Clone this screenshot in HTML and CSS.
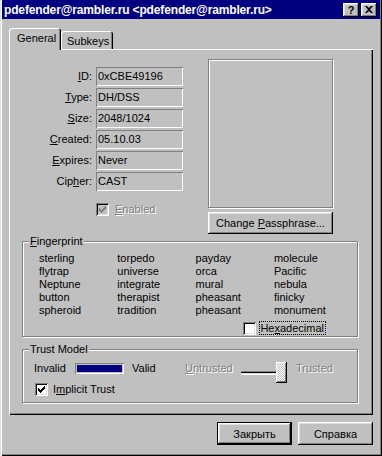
FILE: index.html
```html
<!DOCTYPE html>
<html lang="ru">
<head>
  <meta charset="UTF-8" />
  <title>Key Properties</title>
  <link rel="stylesheet" href="styles.css">
</head>
<body>

  <div class="window">
    <div class="titlebar">
      <span class="title">pdefender@rambler.ru &lt;pdefender@rambler.ru&gt;</span>
      <div class="caption-btns">
        <div class="cap-btn">?</div>
        <div class="cap-btn">
          <svg width="8" height="7" viewBox="0 0 8 7"><path d="M0 0h2l2 2 2-2h2L5 3.5 8 7H6L4 5 2 7H0l3-3.5z" fill="#000"/></svg>
        </div>
      </div>
    </div>

    <div class="tabs">
      <div class="tab active">General</div>
      <div class="tab">Subkeys</div>
    </div>

    <div class="page">
      <div class="top">
        <div class="props">
          <div class="grid">
            <span class="lbl"><u>I</u>D:</span><div class="field">0xCBE49196</div>
            <span class="lbl"><u>T</u>ype:</span><div class="field">DH/DSS</div>
            <span class="lbl"><u>S</u>ize:</span><div class="field">2048/1024</div>
            <span class="lbl"><u>C</u>reated:</span><div class="field">05.10.03</div>
            <span class="lbl"><u>E</u>xpires:</span><div class="field">Never</div>
            <span class="lbl">Cip<u>h</u>er:</span><div class="field">CAST</div>
          </div>
          <div class="check-row enabled-row">
            <span class="checkbox disabled">
              <svg width="13" height="13" viewBox="0 0 13 13"><path d="M9 3h1v1H9zM8 4h2v1H8zM3 5h1v1H3zM7 5h3v1H7zM3 6h2v1H3zM6 6h3v1H6zM3 7h5v1H3zM4 8h3v1H4zM5 9h1v1H5z" fill="#808080"/></svg>
            </span>
            <span class="dis"><u>E</u>nabled</span>
          </div>
        </div>
        <div class="photo-col">
          <div class="photo"></div>
          <div class="btn wide"><span>Change <u>P</u>assphrase...</span></div>
        </div>
      </div>

      <div class="group fingerprint">
        <div class="group-title"><u>F</u>ingerprint</div>
        <div class="words">
          <span>sterling</span><span>torpedo</span><span>payday</span><span>molecule</span>
          <span>flytrap</span><span>universe</span><span>orca</span><span>Pacific</span>
          <span>Neptune</span><span>integrate</span><span>mural</span><span>nebula</span>
          <span>button</span><span>therapist</span><span>pheasant</span><span>finicky</span>
          <span>spheroid</span><span>tradition</span><span>pheasant</span><span>monument</span>
        </div>
        <div class="check-row hex-row">
          <span class="checkbox"></span>
          <span class="focus">He<u>x</u>adecimal</span>
        </div>
      </div>

      <div class="group trust">
        <div class="group-title">Trust Model</div>
        <div class="trust-row">
          <span class="t-invalid">Invalid</span>
          <span class="validity"></span>
          <span class="t-valid">Valid</span>
          <span class="t-untrusted dis"><u>U</u>ntrusted</span>
          <div class="slider">
            <span class="track"></span>
            <span class="thumb"></span>
          </div>
          <span class="t-trusted dis">Trusted</span>
        </div>
        <div class="check-row implicit-row">
          <span class="checkbox">
            <svg width="13" height="13" viewBox="0 0 13 13"><path d="M9 3h1v1H9zM8 4h2v1H8zM3 5h1v1H3zM7 5h3v1H7zM3 6h2v1H3zM6 6h3v1H6zM3 7h5v1H3zM4 8h3v1H4zM5 9h1v1H5z" fill="#000"/></svg>
          </span>
          <span>I<u>m</u>plicit Trust</span>
        </div>
      </div>
    </div>

    <div class="footer">
      <div class="btn default">Закрыть</div>
      <div class="btn">Справка</div>
    </div>
  </div>

</body>
</html>
```

FILE: styles.css
```css
:root {
  --face: #c0c0c0;
  --shadow: #808080;
  --light: #dfdfdf;
  --navy: #000080;
}

* {
  margin: 0; padding: 0; box-sizing: border-box;
}

body {
  background-color: var(--face);
  font-family: "Liberation Sans", Arial, sans-serif;
  font-size: 11px;
  color: #000;
}

u { text-decoration: underline; text-underline-offset: 1px; }

.window {
  width: 382px;
  height: 456px;
  padding: 0 2px 2px 2px;
  background-color: var(--face);
  box-shadow: inset 1px 0 var(--light), inset 2px 0 #fff,
              inset -1px -1px #000, inset -2px -2px var(--shadow);
}

/* title bar */
.titlebar {
  height: 19px;
  background-color: var(--navy);
  color: #fff;
  display: flex;
  align-items: center;
  justify-content: space-between;
  padding: 0 3px 0 2px;
}

.title {
  font-weight: bold;
  font-size: 12px;
  letter-spacing: -0.15px;
}

.caption-btns {
  display: flex;
  gap: 2px;
}

.cap-btn {
  width: 16px;
  height: 14px;
  background-color: var(--face);
  color: #000;
  font-weight: bold;
  font-size: 11px;
  display: flex;
  align-items: center;
  justify-content: center;
  box-shadow: inset -1px -1px #000, inset 1px 1px #fff,
              inset -2px -2px var(--shadow), inset 2px 2px var(--light);
}

/* tabs */
.tabs {
  display: flex;
  align-items: flex-end;
  height: 21px;
  margin: 9px 0 0 7px;
  position: relative;
  z-index: 1;
}

.tab {
  width: 52px;
  height: 18px;
  padding: 4px 0 0 6px;
  line-height: 13px;
  background-color: var(--face);
  border-radius: 3px 3px 0 0;
  box-shadow: inset 1px 1px #fff, inset -1px 0 #000, inset -2px 0 var(--shadow);
}

.tab.active {
  height: 22px;
  margin-bottom: -1px;
  padding-left: 8px;
}

/* tab page */
.page {
  height: 366px;
  margin: 0 7px;
  box-shadow: inset 1px 1px #fff, inset -1px -1px #000, inset -2px -2px var(--shadow);
}

.top {
  display: flex;
  height: 185px;
}

.props {
  width: 174px;
  padding-top: 18px;
}

.grid {
  display: grid;
  grid-template-columns: 83px 87px;
  grid-auto-rows: 19px;
  column-gap: 4px;
  row-gap: 2px;
}

.lbl {
  text-align: right;
  line-height: 19px;
}

.field {
  padding-left: 2px;
  line-height: 19px;
  box-shadow: inset 1px 1px var(--shadow), inset -1px -1px #fff;
}

.check-row {
  display: flex;
  align-items: center;
  gap: 6px;
  line-height: 13px;
}

.enabled-row {
  margin: 12px 0 0 87px;
}

.checkbox {
  width: 13px;
  height: 13px;
  flex: none;
  background-color: #fff;
  box-shadow: inset 1px 1px var(--shadow), inset -1px -1px #fff,
              inset 2px 2px #000, inset -2px -2px var(--light);
}

.checkbox svg { display: block; }

.checkbox.disabled { background-color: var(--face); }

.dis {
  color: var(--shadow);
  text-shadow: 1px 1px 0 #fff;
}

.photo-col {
  width: 125px;
  margin-left: 25px;
  padding-top: 10px;
}

.photo {
  height: 149px;
  border: 1px solid var(--shadow);
  box-shadow: inset 1px 1px #fff, 1px 1px #fff;
  margin-bottom: 4px;
}

.btn {
  width: 75px;
  height: 23px;
  display: flex;
  align-items: center;
  justify-content: center;
  background-color: var(--face);
  box-shadow: inset -1px -1px #000, inset 1px 1px #fff,
              inset -2px -2px var(--shadow), inset 2px 2px var(--light);
}

.btn.wide {
  width: 125px;
  height: 22px;
}

.btn.default {
  border: 1px solid #000;
}

/* group boxes */
.group {
  width: 336px;
  margin-left: 13px;
  border: 1px solid var(--shadow);
  box-shadow: inset 1px 1px #fff, 1px 1px #fff;
}

.group-title {
  width: fit-content;
  margin: -7px 0 0 6px;
  padding: 0 1px;
  line-height: 13px;
  background-color: var(--face);
}

.fingerprint {
  margin-top: 7px;
  padding-bottom: 1px;
}

.words {
  display: grid;
  grid-template-columns: repeat(4, 78.3px);
  grid-auto-rows: 13px;
  line-height: 13px;
  padding: 4px 0 0 16px;
}

.hex-row {
  justify-content: flex-end;
  gap: 3px;
  margin-top: 4px;
  padding-right: 31px;
}

.focus {
  border: 1px dotted #000;
  padding: 0 1px 0 0;
  line-height: 12px;
}

.trust {
  margin-top: 12px;
  padding-bottom: 6px;
}

.trust-row {
  display: flex;
  align-items: flex-start;
  height: 14px;
  margin: 5px 0 0 11px;
  line-height: 14px;
}

.t-invalid { width: 41px; }
.t-valid { width: 61px; padding-left: 8px; }
.t-untrusted { width: 56px; }
.t-trusted { padding-left: 9px; }

.validity {
  width: 49px;
  height: 11px;
  margin-top: 2px;
  background-color: var(--navy);
  box-shadow: inset 1px 1px var(--shadow), inset -1px -1px #fff, inset 0 0 0 2px var(--face);
}

.slider {
  display: flex;
  align-items: center;
  width: 46px;
  height: 21px;
  margin-top: 1px;
}

.track {
  width: 36px;
  height: 4px;
  border-top: 1px solid var(--shadow);
  border-bottom: 1px solid #fff;
  background-color: #000;
  box-shadow: inset 0 -1px var(--light);
}

.thumb {
  width: 11px;
  height: 21px;
  margin-left: -1px;
  background: repeating-conic-gradient(#fff 0 25%, var(--face) 0 50%) 0 0 / 2px 2px;
  box-shadow: inset -1px -1px #000, inset 1px 1px #fff,
              inset -2px -2px var(--shadow), inset 2px 2px var(--light);
}

.implicit-row {
  margin: 7px 0 0 12px;
  gap: 5px;
  line-height: 14px;
}

/* footer */
.footer {
  display: flex;
  justify-content: flex-end;
  gap: 6px;
  margin-top: 7px;
  padding-right: 7px;
}
```
